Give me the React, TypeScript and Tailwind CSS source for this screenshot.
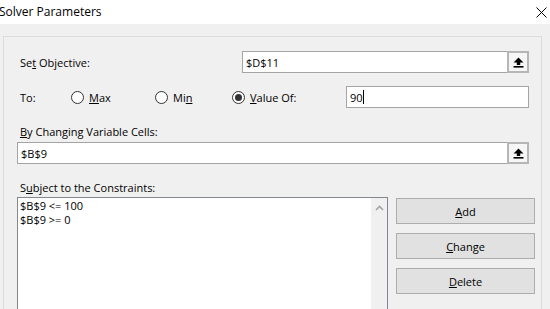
import React from 'react';

function UploadIcon() {
  return (
    <svg width="11" height="11" viewBox="0 0 11 11">
      <path d="M5.5 0.5 L10.5 5.5 L7.2 5.5 L7.2 8 L3.8 8 L3.8 5.5 L0.5 5.5 Z" fill="#000" />
      <rect x="0.5" y="9" width="10" height="1.6" fill="#000" />
    </svg>
  );
}

function RefInput({ value, width }: { value: string; width: string }) {
  return (
    <div className={`flex h-[22px] ${width} border border-[#a4a4a4] bg-white`}>
      <div className="flex-1 flex items-center pl-[3px]">{value}</div>
      <div className="w-[22px] -my-[1px] -mr-[1px] flex items-center justify-center border-2 border-[#b6b6b6] bg-[#f6f6f6]">
        <UploadIcon />
      </div>
    </div>
  );
}

function Radio({ checked, children, width }: { checked?: boolean; children: React.ReactNode; width: string }) {
  return (
    <div className={`flex items-center gap-[5px] ${width}`}>
      <div className="w-[13px] h-[13px] rounded-full border border-[#333] bg-white flex items-center justify-center">
        {checked && <div className="w-[7px] h-[7px] rounded-full bg-[#333]" />}
      </div>
      <span>{children}</span>
    </div>
  );
}

function DialogButton({ children }: { children: React.ReactNode }) {
  return (
    <div className="h-[26px] border border-[#adadad] bg-[#e1e1e1] flex items-center justify-center">
      {children}
    </div>
  );
}

export default function App() {
  return (
    <div className="w-[550px] h-[309px] overflow-hidden bg-[#f0f0f0] font-['Open_Sans',sans-serif] text-[11px] text-black leading-none select-none">
      {/* Title bar */}
      <div className="h-[24px] bg-white flex items-center justify-between">
        <span className="-ml-[1px] text-[12px]">Solver Parameters</span>
        <svg width="11" height="11" viewBox="0 0 11 11" className="mr-[3px]">
          <path d="M0.5 0.5 L10.5 10.5 M10.5 0.5 L0.5 10.5" stroke="#000" strokeWidth="1" />
        </svg>
      </div>

      <div className="ml-[3px] mt-[12px] w-[539px] h-[300px] border border-[#dcdcdc] pl-[13px] pt-[14px]">
        {/* Set Objective */}
        <div className="flex items-center h-[22px]">
          <span className="pl-[3px] w-[225px]">
            Se<u>t</u> Objective:
          </span>
          <RefInput value="$D$11" width="w-[287px]" />
        </div>

        {/* To */}
        <div className="flex items-center h-[22px] mt-[13px]">
          <span className="pl-[3px] w-[54px]">To:</span>
          <Radio width="w-[84px]">
            <u>M</u>ax
          </Radio>
          <Radio width="w-[77px]">
            Mi<u>n</u>
          </Radio>
          <Radio checked width="w-[114px]">
            <u>V</u>alue Of:
          </Radio>
          <div className="w-[183px] h-[22px] border border-[#a4a4a4] bg-white flex items-center pl-[3px]">
            90<span className="w-[1px] h-[14px] bg-black" />
          </div>
        </div>

        {/* Changing cells */}
        <div className="mt-[15px] h-[16px] flex items-center pl-[3px]">
          <span>
            <u>B</u>y Changing Variable Cells:
          </span>
        </div>
        <div className="mt-[3px]">
          <RefInput value="$B$9" width="w-[512px]" />
        </div>

        {/* Constraints */}
        <div className="mt-[15px] h-[16px] flex items-center pl-[3px]">
          <span>
            S<u>u</u>bject to the Constraints:
          </span>
        </div>
        <div className="mt-[2px] flex">
          <div className="w-[371px] h-[130px] border border-[#828790] bg-white flex">
            <div className="flex-1 pl-[2px] pt-[1px] leading-[14px]">
              <div>$B$9 &lt;= 100</div>
              <div>$B$9 &gt;= 0</div>
            </div>
            <div className="w-[16px] bg-[#f0f0f0] flex justify-center pt-[7px]">
              <svg width="9" height="6" viewBox="0 0 9 6">
                <path d="M1 5 L4.5 1.5 L8 5" stroke="#a3a3a3" strokeWidth="1.6" fill="none" />
              </svg>
            </div>
          </div>
          <div className="ml-[8px] mt-[1px] w-[139px] flex flex-col gap-[9px]">
            <DialogButton>
              <span>
                <u>A</u>dd
              </span>
            </DialogButton>
            <DialogButton>
              <span>
                <u>C</u>hange
              </span>
            </DialogButton>
            <DialogButton>
              <span>
                <u>D</u>elete
              </span>
            </DialogButton>
          </div>
        </div>
      </div>
    </div>
  );
}
